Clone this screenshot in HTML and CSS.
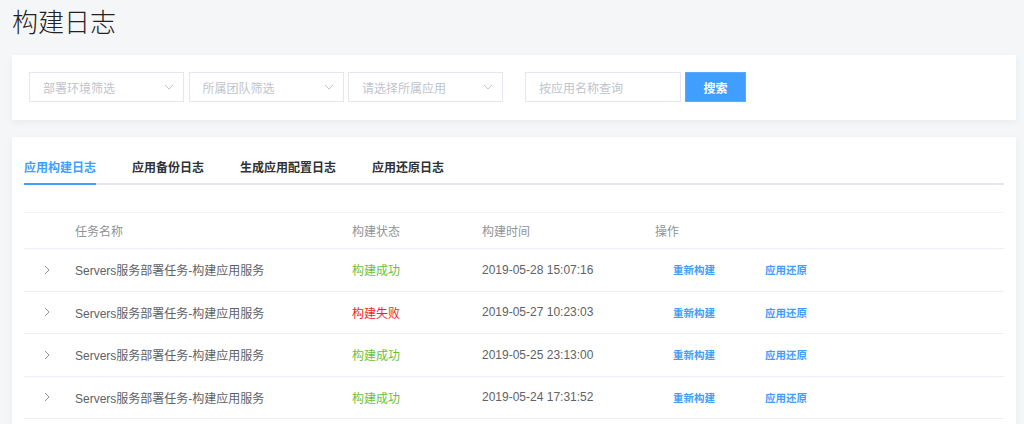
FILE: index.html
```html
<!DOCTYPE html>
<html lang="zh-CN">
<head>
<meta charset="utf-8">
<title>构建日志</title>
<link rel="stylesheet" href="styles.css">
</head>
<body>
<div class="page">
  <h1 class="title">构建日志</h1>

  <div class="card filter-card">
    <div class="selects">
      <div class="select"><span class="ph">部署环境筛选</span><svg class="caret" width="10" height="6" viewBox="0 0 10 6"><path d="M1 1 L5 5 L9 1" fill="none" stroke="#c0c4cc" stroke-width="1"/></svg></div>
      <div class="select"><span class="ph">所属团队筛选</span><svg class="caret" width="10" height="6" viewBox="0 0 10 6"><path d="M1 1 L5 5 L9 1" fill="none" stroke="#c0c4cc" stroke-width="1"/></svg></div>
      <div class="select"><span class="ph">请选择所属应用</span><svg class="caret" width="10" height="6" viewBox="0 0 10 6"><path d="M1 1 L5 5 L9 1" fill="none" stroke="#c0c4cc" stroke-width="1"/></svg></div>
    </div>
    <div class="search">
      <div class="input"><span class="ph">按应用名称查询</span></div>
      <button class="btn">搜索</button>
    </div>
  </div>

  <div class="card main-card">
    <div class="tabs">
      <div class="tab active">应用构建日志</div>
      <div class="tab">应用备份日志</div>
      <div class="tab">生成应用配置日志</div>
      <div class="tab">应用还原日志</div>
    </div>

    <div class="table">
      <div class="row head">
        <div class="cell"></div>
        <div class="cell">任务名称</div>
        <div class="cell">构建状态</div>
        <div class="cell">构建时间</div>
        <div class="cell">操作</div>
      </div>
      <div class="row">
        <div class="cell exp"><svg width="6" height="10" viewBox="0 0 6 10"><path d="M1 1 L5 5 L1 9" fill="none" stroke="#909399" stroke-width="1"/></svg></div>
        <div class="cell">Servers服务部署任务-构建应用服务</div>
        <div class="cell ok">构建成功</div>
        <div class="cell">2019-05-28 15:07:16</div>
        <div class="cell ops"><a class="link">重新构建</a><a class="link">应用还原</a></div>
      </div>
      <div class="row">
        <div class="cell exp"><svg width="6" height="10" viewBox="0 0 6 10"><path d="M1 1 L5 5 L1 9" fill="none" stroke="#909399" stroke-width="1"/></svg></div>
        <div class="cell">Servers服务部署任务-构建应用服务</div>
        <div class="cell fail">构建失败</div>
        <div class="cell">2019-05-27 10:23:03</div>
        <div class="cell ops"><a class="link">重新构建</a><a class="link">应用还原</a></div>
      </div>
      <div class="row">
        <div class="cell exp"><svg width="6" height="10" viewBox="0 0 6 10"><path d="M1 1 L5 5 L1 9" fill="none" stroke="#909399" stroke-width="1"/></svg></div>
        <div class="cell">Servers服务部署任务-构建应用服务</div>
        <div class="cell ok">构建成功</div>
        <div class="cell">2019-05-25 23:13:00</div>
        <div class="cell ops"><a class="link">重新构建</a><a class="link">应用还原</a></div>
      </div>
      <div class="row">
        <div class="cell exp"><svg width="6" height="10" viewBox="0 0 6 10"><path d="M1 1 L5 5 L1 9" fill="none" stroke="#909399" stroke-width="1"/></svg></div>
        <div class="cell">Servers服务部署任务-构建应用服务</div>
        <div class="cell ok">构建成功</div>
        <div class="cell">2019-05-24 17:31:52</div>
        <div class="cell ops"><a class="link">重新构建</a><a class="link">应用还原</a></div>
      </div>
    </div>
  </div>
</div>
</body>
</html>
```

FILE: styles.css
```css
* { box-sizing: border-box; }
html, body { margin: 0; padding: 0; }
body {
  background: #f5f6f8;
  font-family: "Liberation Sans", "Noto Sans CJK SC", sans-serif;
  color: #606266;
  overflow: hidden;
}
.page {
  padding: 0 8px 0 12px;
}
.title {
  margin: 0;
  padding-top: 6px;
  height: 55px;
  font-size: 26px;
  line-height: 30px;
  font-weight: 300;
  color: #222;
  font-family: "Noto Sans CJK SC", sans-serif;
}
.card {
  background: #fff;
  box-shadow: 0 2px 8px rgba(0, 0, 0, 0.05);
}
.filter-card {
  height: 65px;
  padding: 17px 17px 0 17px;
  display: flex;
  align-items: flex-start;
}
.selects {
  display: flex;
  gap: 4.5px;
}
.select {
  width: 155px;
  height: 30px;
  border: 1px solid #e4e7ed;
  display: flex;
  align-items: center;
  justify-content: space-between;
  padding: 0 9px 0 13px;
}
.ph {
  font-size: 12px;
  color: #c0c4cc;
  font-family: "Noto Sans CJK SC", sans-serif;
}
.caret { display: block; }
.search {
  display: flex;
  margin-left: 22px;
  gap: 4px;
}
.input {
  width: 156px;
  height: 30px;
  border: 1px solid #e4e7ed;
  display: flex;
  align-items: center;
  padding: 0 13px;
}
.btn {
  width: 61px;
  height: 30px;
  border: 1px solid #5aaaff;
  background: #409eff;
  color: #fff;
  font-size: 12px;
  font-weight: 700;
  font-family: "Noto Sans CJK SC", sans-serif;
  padding: 0;
}
.main-card {
  margin-top: 17px;
  padding: 14px 12px 0;
  min-height: 290px;
}
.tabs {
  display: flex;
  gap: 36px;
  border-bottom: 2px solid #e4e7ed;
}
.tab {
  position: relative;
  height: 32px;
  line-height: 32px;
  font-size: 12px;
  font-weight: 700;
  color: #303133;
  font-family: "Noto Sans CJK SC", sans-serif;
}
.tab.active { color: #409eff; }
.tab.active::after {
  content: "";
  position: absolute;
  left: 0;
  right: 0;
  bottom: -2px;
  height: 2px;
  background: #409eff;
}
.table {
  margin-top: 27px;
  border-top: 1px solid #f3f4f7;
}
.row {
  display: grid;
  grid-template-columns: 51px 277px 130px 173px 1fr;
  height: 42.5px;
  align-items: center;
  border-bottom: 1px solid #ebeef5;
  font-size: 12px;
}
.row.head {
  height: 36px;
  color: #909399;
}
.cell {
  white-space: nowrap;
}
.exp {
  padding-left: 20px;
  display: flex;
  align-items: center;
}
.exp svg { display: block; }
.ok { color: #67c23a; }
.fail { color: #f5222d; }
.ops {
  display: flex;
  padding-left: 18px;
  gap: 50px;
}
.link {
  color: #409eff;
  font-size: 10.5px;
  font-weight: 700;
  font-family: "Noto Sans CJK SC", sans-serif;
  cursor: pointer;
}
```
